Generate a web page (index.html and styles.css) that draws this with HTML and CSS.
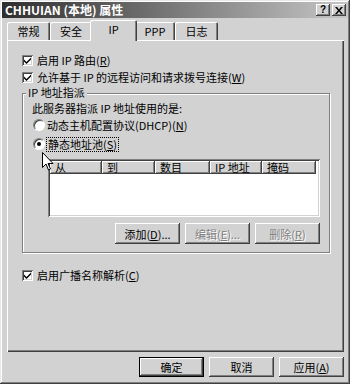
FILE: index.html
```html
<!DOCTYPE html>
<html lang="zh-CN">
<head>
    <meta charset="UTF-8">
    <meta name="viewport" content="width=device-width, initial-scale=1.0">
    <title>CHHUIAN (本地) 属性</title>
    <link rel="stylesheet" href="styles.css">
</head>
<body>

    <div class="window">
        <div class="titlebar">
            <span class="title">CHHUIAN (本地) 属性</span>
            <div class="caption-btns">
                <span class="cbtn help">?</span>
                <span class="cbtn close">
                    <svg width="8" height="7" viewBox="0 0 8 7"><path d="M0 0h2l2 2.5L6 0h2L5 3.5 8 7H6L4 4.5 2 7H0l3-3.5z" fill="#000"/></svg>
                </span>
            </div>
        </div>

        <div class="tabs">
            <div class="tab tab--w43">常规</div>
            <div class="tab tab--w42">安全</div>
            <div class="tab tab--active">IP</div>
            <div class="tab tab--w40">PPP</div>
            <div class="tab tab--w43">日志</div>
        </div>

        <div class="panel">
            <div class="row">
                <span class="check"><svg width="7" height="7" viewBox="0 0 7 7"><path d="M0 2.5l2.5 2.5L7 0.5V2.5L2.5 7 0 4.5z" fill="#000"/></svg></span>
                启用 IP 路由(<u>R</u>)
            </div>
            <div class="row row--gap3">
                <span class="check"><svg width="7" height="7" viewBox="0 0 7 7"><path d="M0 2.5l2.5 2.5L7 0.5V2.5L2.5 7 0 4.5z" fill="#000"/></svg></span>
                允许基于 IP 的远程访问和请求拨号连接(<u>W</u>)
            </div>

            <div class="group">
                <div class="group__title">IP 地址指派</div>
                <div class="row row--gap3">此服务器指派 IP 地址使用的是:</div>
                <div class="row row--radio row--gap3">
                    <span class="radio"></span>
                    动态主机配置协议(DHCP)(<u>N</u>)
                </div>
                <div class="row row--radio row--gap5">
                    <span class="radio radio--on"></span>
                    <span class="focus">静态地址池(<u>S</u>)</span>
                </div>

                <div class="list">
                    <div class="list__head">
                        <span class="col col--1">从</span>
                        <span class="col col--2">到</span>
                        <span class="col col--3">数目</span>
                        <span class="col col--4">IP 地址</span>
                        <span class="col col--5">掩码</span>
                    </div>
                    <div class="list__body"></div>
                </div>

                <div class="group__btns">
                    <span class="btn">添加(<u>D</u>)...</span>
                    <span class="btn btn--off">编辑(<u>E</u>)...</span>
                    <span class="btn btn--off">删除(<u>R</u>)</span>
                </div>
            </div>

            <div class="row row--gap15">
                <span class="check"><svg width="7" height="7" viewBox="0 0 7 7"><path d="M0 2.5l2.5 2.5L7 0.5V2.5L2.5 7 0 4.5z" fill="#000"/></svg></span>
                启用广播名称解析(<u>C</u>)
            </div>
        </div>

        <div class="footer">
            <span class="btn btn--default">确定</span>
            <span class="btn">取消</span>
            <span class="btn">应用(<u>A</u>)</span>
        </div>

        <svg class="cursor" width="12" height="19" viewBox="0 0 12 19">
            <path d="M0.5 0.5V15.5L4 12l2.5 6 2-1-2.5-5.5H11z" fill="#fff" stroke="#000" stroke-width="1"/>
        </svg>
    </div>

</body>
</html>
```

FILE: styles.css
```css
body {
    margin: 0;
    background: #d2d2d2;
    font-family: "Noto Sans CJK SC", "Noto Sans", sans-serif;
    font-size: 11px;
    color: #000;
}

.window {
    position: relative;
    box-sizing: border-box;
    width: 350px;
    height: 384px;
    padding: 2px 2px 7px;
    display: flex;
    flex-direction: column;
    background: #d2d2d2;
    box-shadow: inset -1px -1px #404040, inset 1px 1px #e8e8e8, inset -2px -2px #808080, inset 2px 2px #fff;
}

/* title bar */
.titlebar {
    height: 16px;
    display: flex;
    align-items: center;
    justify-content: space-between;
    padding: 0 2px 0 3px;
    background: linear-gradient(to right, #2e2e2e, #c6c6c6);
}

.title {
    color: #fff;
    font-weight: bold;
    font-size: 12px;
    line-height: 16px;
}

.caption-btns {
    display: flex;
    gap: 2px;
}

.cbtn {
    width: 14px;
    height: 12px;
    display: flex;
    align-items: center;
    justify-content: center;
    background: #d2d2d2;
    box-shadow: inset -1px -1px #404040, inset 1px 1px #fff, inset -2px -2px #808080;
    font-family: "Liberation Sans", sans-serif;
    font-weight: bold;
    font-size: 10px;
    line-height: 12px;
}

/* tabs */
.tabs {
    display: flex;
    align-items: flex-end;
    height: 20px;
    margin: 2px 0 0 5px;
}

.tab {
    height: 18px;
    line-height: 18px;
    text-align: center;
    border-radius: 2px 2px 0 0;
    box-shadow: inset 1px 1px #fff, inset -1px 0 #404040, inset -2px 0 #808080;
}

.tab--w40 { width: 40px; }
.tab--w42 { width: 42px; }
.tab--w43 { width: 43px; }

.tab--active {
    position: relative;
    z-index: 1;
    width: 47px;
    height: 21px;
    line-height: 19px;
    margin: 0 -2px -1px;
    background: #d2d2d2;
}

/* tab page */
.panel {
    flex: 1;
    margin: 0 4px 0 5px;
    padding: 13px 14px 0 15px;
    display: flex;
    flex-direction: column;
    box-shadow: inset 1px 1px #fff, inset -1px -1px #404040, inset -2px -2px #808080;
}

.row {
    display: flex;
    align-items: center;
    height: 14px;
    line-height: 14px;
    white-space: nowrap;
}

.row--gap3 { margin-top: 3px; }
.row--gap5 { margin-top: 5px; }
.row--gap15 { margin-top: 15px; }

u {
    text-underline-offset: 1px;
}

.check {
    box-sizing: border-box;
    width: 11px;
    height: 11px;
    margin-right: 4px;
    display: flex;
    align-items: center;
    justify-content: center;
    background: #fff;
    box-shadow: inset 1px 1px #808080, inset -1px -1px #fff, inset 2px 2px #404040, inset -2px -2px #d2d2d2;
}

.row--radio {
    padding-left: 1px;
}

.radio {
    box-sizing: border-box;
    width: 12px;
    height: 12px;
    margin-right: 2px;
    border-radius: 50%;
    background: #fff;
    border: 1px solid;
    border-color: #808080 #fff #fff #808080;
    box-shadow: inset 1px 1px #404040;
    display: flex;
    align-items: center;
    justify-content: center;
}

.radio--on::after {
    content: "";
    width: 4px;
    height: 4px;
    border-radius: 50%;
    background: #000;
}

.focus {
    padding: 0 1px;
    outline: 1px dotted #000;
    line-height: 13px;
}

/* group box */
.group {
    margin-top: 9px;
    padding: 0 9px 8px;
    display: flex;
    flex-direction: column;
    border: 1px solid #808080;
    box-shadow: 1px 1px #fff, inset 1px 1px #fff;
}

.group__title {
    align-self: flex-start;
    margin: -8px 0 0 -6px;
    padding: 0 2px;
    height: 12px;
    line-height: 12px;
    background: #d2d2d2;
}

/* list view */
.list {
    margin: 8px 0 0 16px;
    height: 58px;
    box-sizing: border-box;
    padding: 2px;
    display: flex;
    flex-direction: column;
    background: #fff;
    box-shadow: inset 1px 1px #808080, inset -1px -1px #fff, inset 2px 2px #404040, inset -2px -2px #d2d2d2;
}

.list__head {
    display: flex;
    height: 13px;
}

.col {
    box-sizing: border-box;
    padding-left: 5px;
    line-height: 13px;
    background: #d2d2d2;
    box-shadow: inset -1px -1px #404040, inset 1px 1px #fff, inset -2px -2px #808080;
    white-space: nowrap;
}

.col--1 { width: 52px; }
.col--2 { width: 53px; }
.col--3 { width: 55px; }
.col--4 { width: 52px; }
.col--5 { width: 54px; }

.list__body {
    flex: 1;
}

/* buttons */
.group__btns {
    margin-top: 6px;
    display: flex;
    justify-content: flex-end;
    gap: 5px;
}

.btn {
    box-sizing: border-box;
    width: 65px;
    height: 21px;
    display: flex;
    align-items: center;
    justify-content: center;
    background: #d2d2d2;
    box-shadow: inset -1px -1px #404040, inset 1px 1px #fff, inset -2px -2px #808080;
    white-space: nowrap;
}

.btn--off {
    color: #808080;
    text-shadow: 1px 1px #fff;
}

.btn--default {
    border: 1px solid #000;
}

.footer {
    margin: 5px 4px 0 0;
    height: 20px;
    display: flex;
    justify-content: flex-end;
    gap: 5px;
}

.footer .btn {
    height: 20px;
}

.cursor {
    position: absolute;
    left: 42px;
    top: 152px;
}
```
